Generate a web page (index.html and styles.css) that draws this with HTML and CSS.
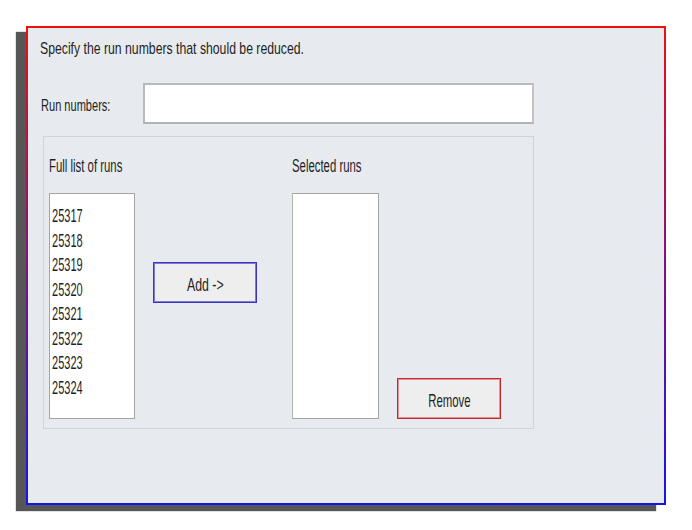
FILE: index.html
```html
<!DOCTYPE html>
<html>
<head>
<meta charset="utf-8">
<link rel="stylesheet" href="styles.css">
</head>
<body>
<div class="frame">
  <div class="title">Specify the run numbers that should be reduced.</div>
  <div class="row">
    <div class="row-label"><span class="t">Run numbers:</span></div>
    <div class="input"></div>
  </div>
  <div class="group">
    <div class="col">
      <div class="label"><span class="t">Full list of runs</span></div>
      <div class="list">
        <div class="item">25317</div>
        <div class="item">25318</div>
        <div class="item">25319</div>
        <div class="item">25320</div>
        <div class="item">25321</div>
        <div class="item">25322</div>
        <div class="item">25323</div>
        <div class="item">25324</div>
      </div>
    </div>
    <div class="add-col">
      <div class="btn add"><span class="bt">Add -&gt;</span></div>
    </div>
    <div class="col col-sel">
      <div class="label"><span class="t">Selected runs</span></div>
      <div class="list sel"></div>
    </div>
    <div class="remove-col">
      <div class="btn remove"><span class="bt rt">Remove</span></div>
    </div>
  </div>
</div>
</body>
</html>
```

FILE: styles.css
```css
html, body {
  margin: 0;
  padding: 0;
  background: #ffffff;
}
body {
  min-height: 530px;
  padding-top: 26px;
  box-sizing: border-box;
  font-family: "Liberation Sans", Arial, sans-serif;
  color: #1f1f1f;
}
.frame {
  box-sizing: border-box;
  width: 640px;
  height: 479px;
  margin: 0 0 0 26px;
  padding: 11px 12px 0 12px;
  background: #e7ebef;
  border: 2px solid;
  border-image: linear-gradient(to bottom, #ee1010, #1414ee) 1;
  box-shadow: -10px 6px 1px #565656;
}
.title {
  font-size: 17px;
  line-height: 20px;
  white-space: nowrap;
  transform: scaleX(0.72);
  transform-origin: 0 50%;
}
.t {
  display: inline-block;
  white-space: nowrap;
  transform: scaleX(0.65);
  transform-origin: 0 50%;
}
.row {
  display: flex;
  align-items: flex-start;
  margin-top: 24px;
}
.row-label {
  width: 102px;
  padding-left: 1px;
  margin-top: 13px;
  font-size: 17px;
  line-height: 20px;
}
.input {
  box-sizing: border-box;
  width: 391px;
  height: 41px;
  background: #ffffff;
  border: 2px solid #b9b9b9;
  border-right-color: #c4c4c4;
  border-bottom-color: #b3b3b3;
}
.group {
  box-sizing: border-box;
  width: 491px;
  margin: 12px 0 0 3px;
  padding: 19px 0 9px 5px;
  border: 1px solid #d0d4d8;
  display: flex;
  align-items: flex-start;
}
.col {
  width: 86px;
  flex: none;
  display: flex;
  flex-direction: column;
}
.col.col-sel {
  width: 87px;
}
.label {
  font-size: 17.5px;
  line-height: 20px;
  height: 20px;
  white-space: nowrap;
}
.list {
  box-sizing: border-box;
  width: 100%;
  height: 226px;
  margin-top: 17px;
  background: #ffffff;
  border: 1px solid #a4a4a4;
  padding: 10px 0 0 2px;
}
.list.sel {
  border-left-color: #a9bca9;
}
.item {
  font-size: 19px;
  line-height: 24.5px;
  white-space: nowrap;
  transform: scaleX(0.58);
  transform-origin: 0 50%;
}
.add-col {
  flex: none;
  margin: 106px 35px 0 18px;
}
.remove-col {
  flex: none;
  align-self: flex-end;
  margin-left: 18px;
}
.btn {
  box-sizing: border-box;
  width: 104px;
  height: 41px;
  padding-top: 6px;
  background: #eeeeee;
  text-align: center;
  font-size: 19px;
  line-height: 31px;
}
.btn.add {
  border: 1px solid #3c34bf;
  box-shadow: inset 0 0 0 1px #7f7ad6;
}
.btn.remove {
  border: 1px solid #c4262c;
  box-shadow: inset 0 0 0 1px #e29494;
}
.bt {
  display: inline-block;
  white-space: nowrap;
  transform: scaleX(0.65);
  transform-origin: 50% 50%;
}
.bt.rt {
  transform: scaleX(0.6);
}
```
